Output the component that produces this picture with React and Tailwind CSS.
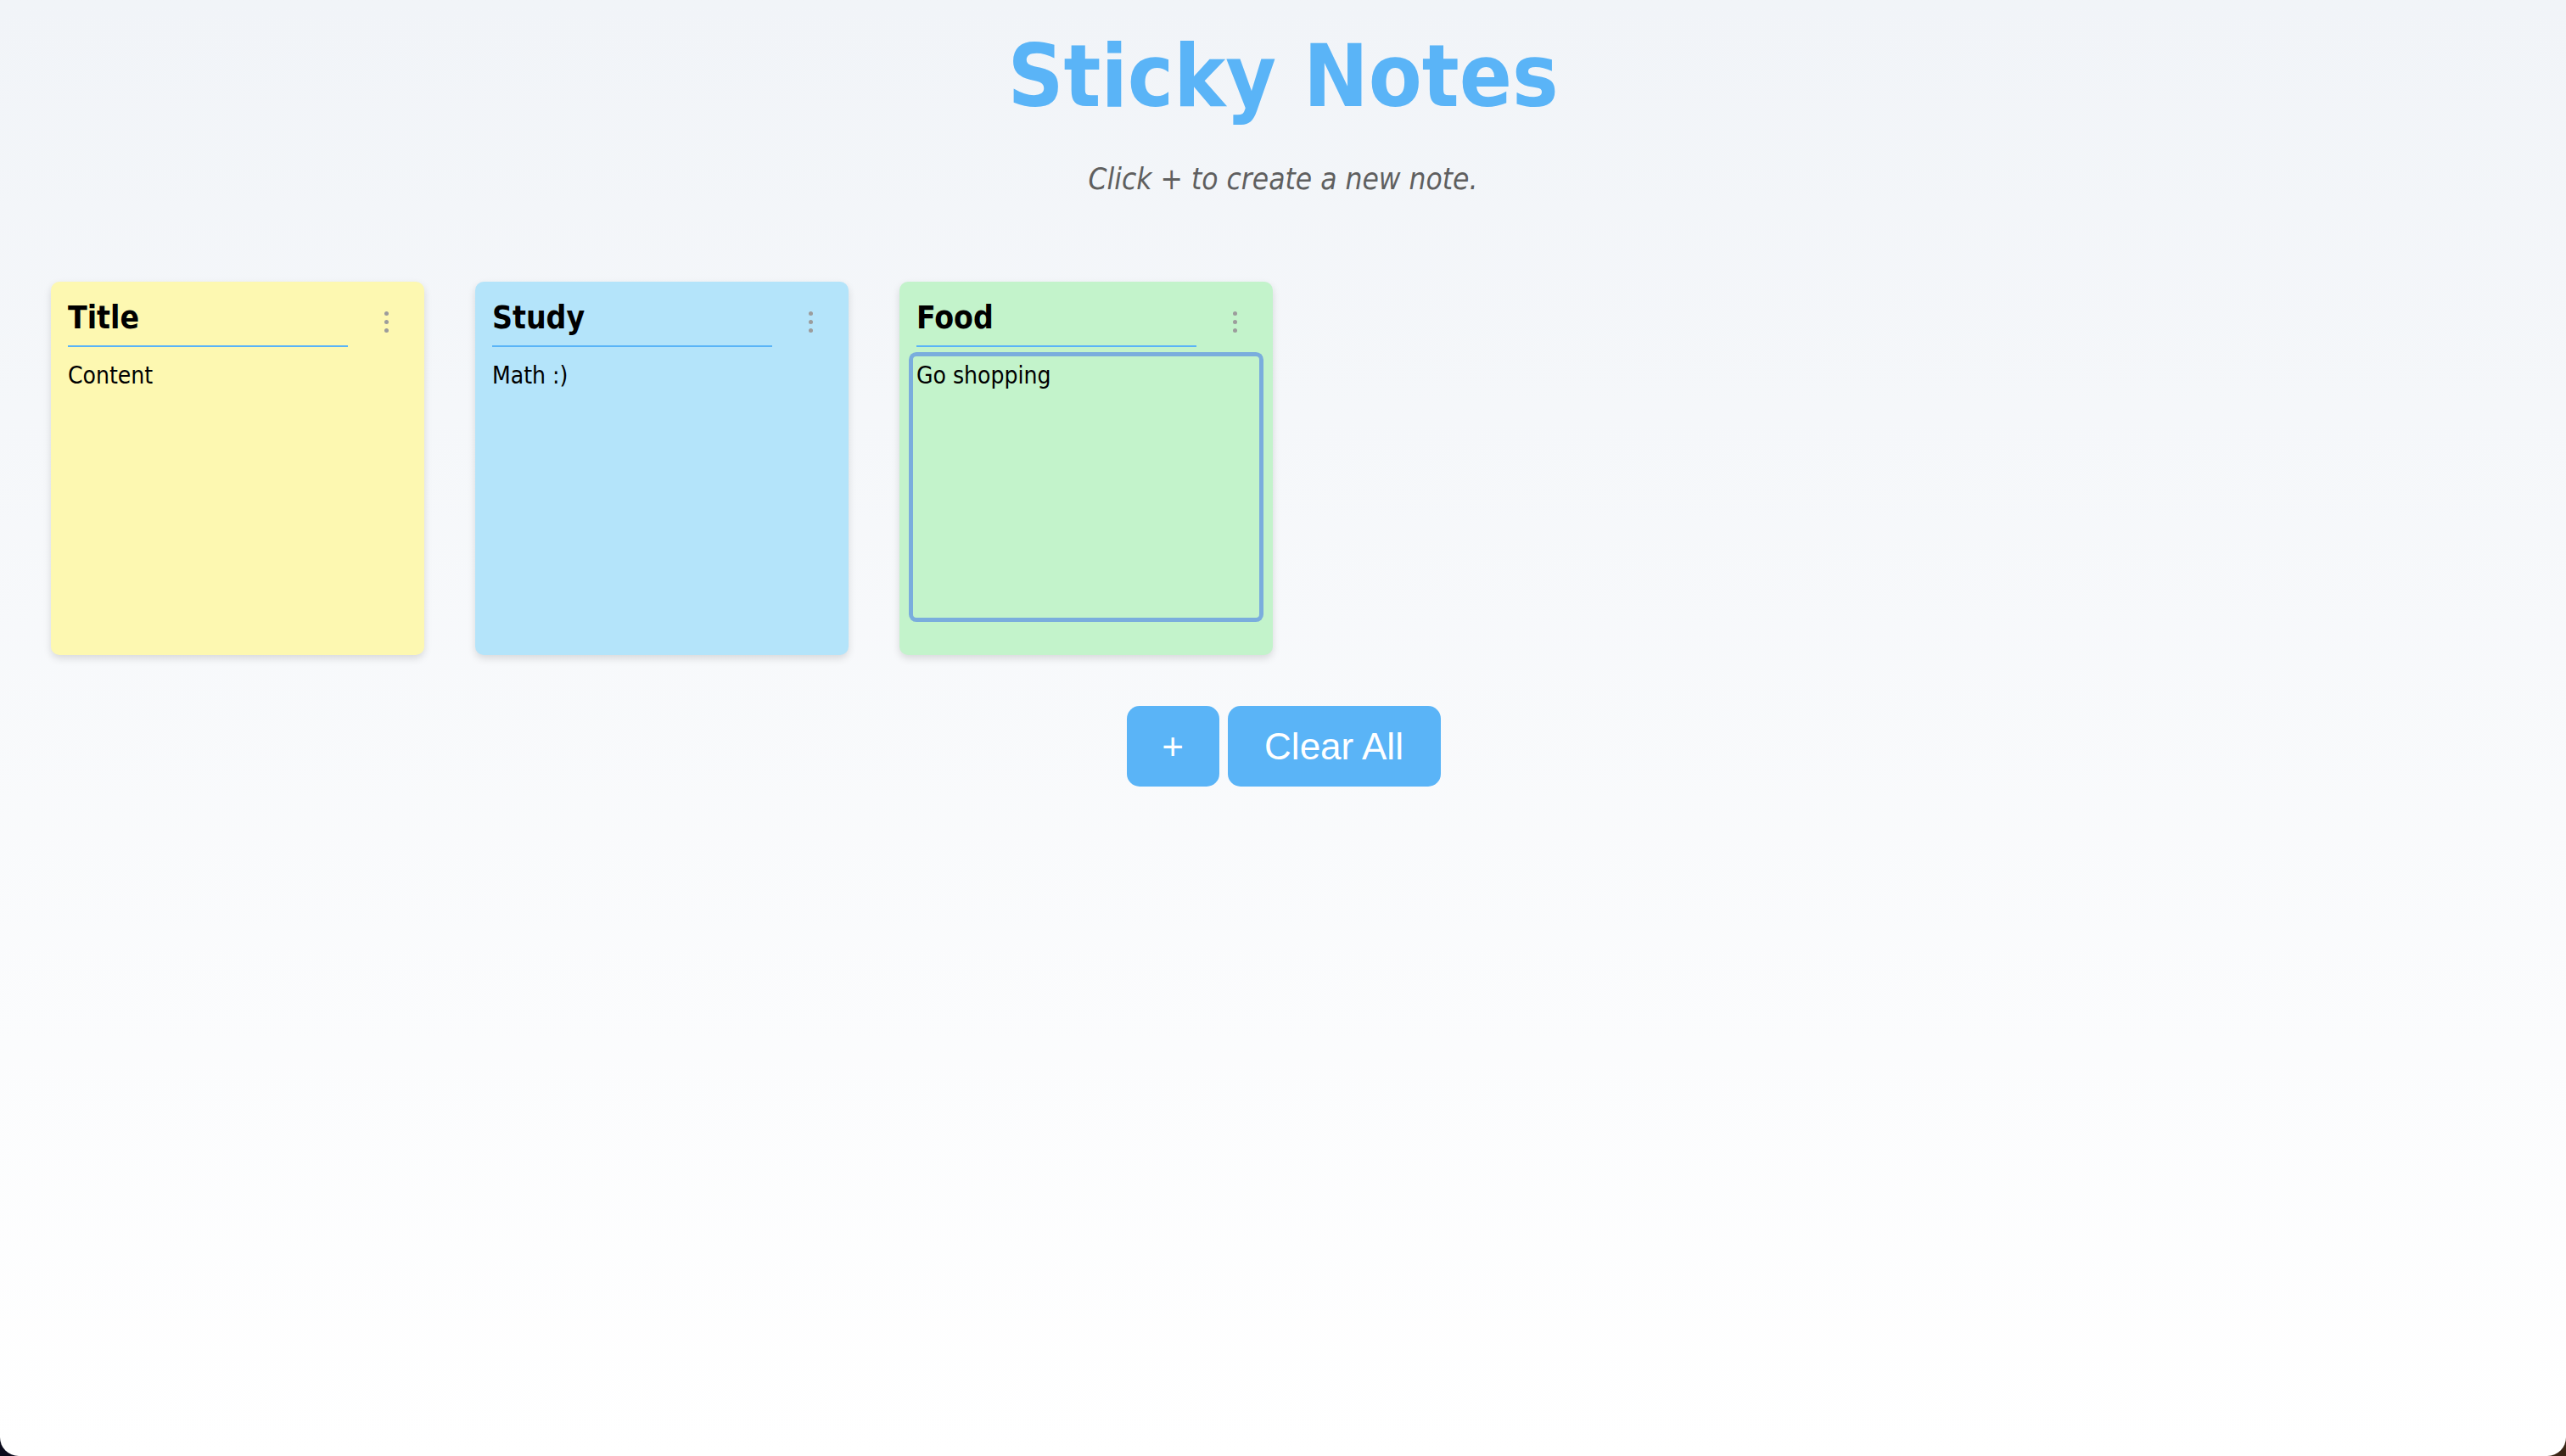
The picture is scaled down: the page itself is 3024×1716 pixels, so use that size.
import React from "react";

const notes = [
  { title: "Title", body: "Content", bg: "bg-[#fdf8b1]", focused: false },
  { title: "Study", body: "Math :)", bg: "bg-[#b4e4fa]", focused: false },
  { title: "Food", body: "Go shopping", bg: "bg-[#c3f3cb]", focused: true },
];

function Dots() {
  return (
    <div className="ml-auto mr-[22px] mt-[15px] flex flex-col gap-[5px]">
      <span className="block h-[5px] w-[5px] rounded-full bg-[#9c9c9c]" />
      <span className="block h-[5px] w-[5px] rounded-full bg-[#9c9c9c]" />
      <span className="block h-[5px] w-[5px] rounded-full bg-[#9c9c9c]" />
    </div>
  );
}

function Note({ note }) {
  return (
    <div
      className={`flex h-[440px] w-[440px] flex-col rounded-[10px] p-5 shadow-[0_4px_10px_rgba(0,0,0,0.13)] ${note.bg}`}
    >
      <div className="flex items-start">
        <div className="w-[330px] border-b-2 border-[#5ab4f7] pb-[9px] text-[37px] font-bold leading-[46px] text-black">
          {note.title}
        </div>
        <Dots />
      </div>
      <div
        className={`-mx-[4px] mt-[11px] h-[308px] rounded-[4px] px-[4px] pt-[6px] text-[28px] leading-[34px] text-black ${
          note.focused ? "shadow-[0_0_0_5px_#7aaddd]" : ""
        }`}
      >
        {note.body}
      </div>
    </div>
  );
}

export default function App() {
  return (
    <div className="h-[1716px] w-full bg-gradient-to-r from-[#0b0b1c] to-[#3a2616]">
      <div
        className="flex h-[1716px] w-full flex-col rounded-b-[22px] bg-gradient-to-b from-[#f1f4f8] to-white"
        style={{ fontFamily: '"DejaVu Sans Condensed", "Liberation Sans", sans-serif' }}
      >
        <h1 className="pt-[39px] text-center text-[102px] font-bold leading-none text-[#5ab4f7]">
          Sticky Notes
        </h1>
        <p className="mt-[53px] text-center text-[35px] italic leading-none text-[#5f5f5f]">
          Click + to create a new note.
        </p>
        <div className="mt-[103px] flex gap-[60px] pl-[60px]">
          {notes.map((n) => (
            <Note key={n.title} note={n} />
          ))}
        </div>
        <div
          className="mt-[60px] flex justify-center gap-[10px] pl-[1px]"
          style={{ fontFamily: '"Liberation Sans", Arial, sans-serif' }}
        >
          <button className="flex h-[95px] w-[109px] items-center justify-center rounded-[15px] bg-[#5ab4f7] text-[44px] text-white">
            +
          </button>
          <button className="flex h-[95px] w-[251px] items-center justify-center rounded-[15px] bg-[#5ab4f7] text-[44px] text-white">
            Clear All
          </button>
        </div>
      </div>
    </div>
  );
}
